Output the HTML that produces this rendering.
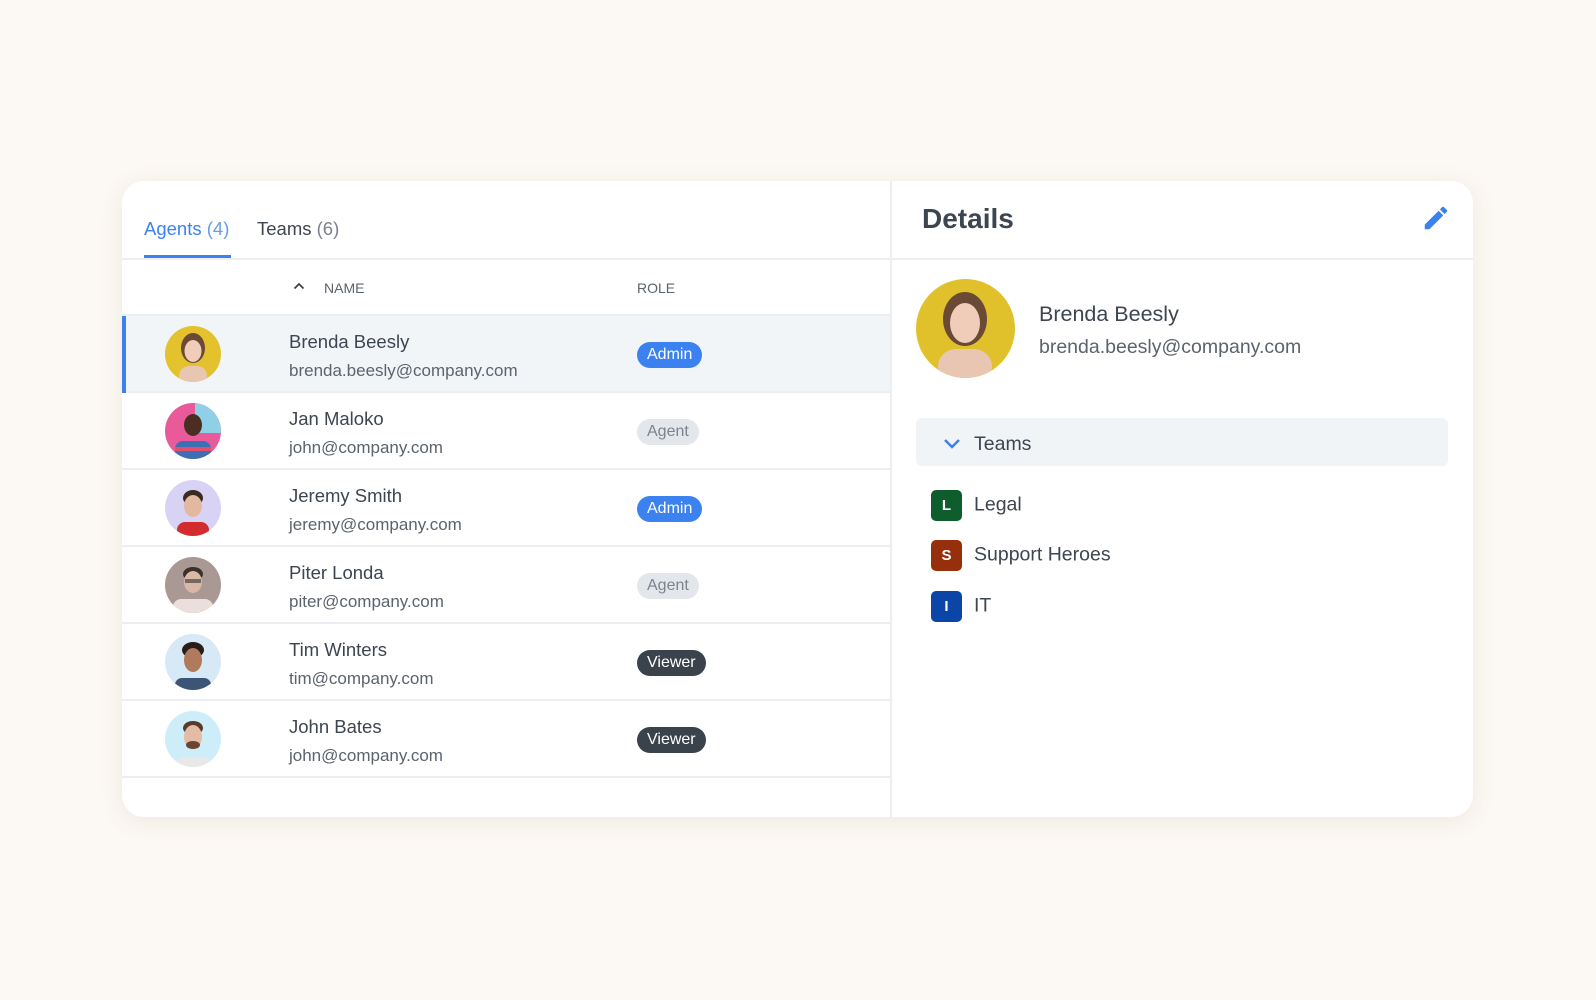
<!DOCTYPE html>
<html><head><meta charset="utf-8"><style>
*{box-sizing:border-box;margin:0;padding:0}
body{width:1596px;height:1000px;background:#fcf8f3;font-family:"Liberation Sans",sans-serif;position:relative;overflow:hidden;color:#3d4550}
.card{position:absolute;left:122px;top:181px;width:1351px;height:636px;background:#fff;border-radius:22px;box-shadow:0 4px 24px rgba(120,100,80,.10);overflow:hidden}
.vdiv{position:absolute;left:768px;top:0;bottom:0;width:2px;background:#eceef0}
.hline{position:absolute;height:2px;background:#eceef0}
.abs{position:absolute;white-space:nowrap}
.tab{font-size:18.5px}
.row{position:absolute;left:0;width:768px;height:77px;border-bottom:2px solid #eceef0}
.av{position:absolute;left:43px;top:10px;width:56px;height:56px;border-radius:50%;overflow:hidden}
.nm{position:absolute;left:167px;top:15px;font-size:18.5px;color:#3d4550}
.em{position:absolute;left:167px;top:45px;font-size:17px;color:#5b636d}
.badge{position:absolute;left:515px;top:26px;height:26px;line-height:26px;border-radius:13px;padding:0 10px;font-size:16px}
.admin{background:#3b82f0;color:#fff}
.agent{background:#e3e7ec;color:#7b838d}
.viewer{background:#3a424c;color:#fff}
.team{position:absolute;left:809px;font-size:19.5px;color:#3d4550}
.tic{display:inline-block;width:31px;height:31px;border-radius:5px;color:#fff;font-weight:bold;font-size:15px;text-align:center;line-height:31px;vertical-align:middle;margin-right:12px}
</style></head><body>
<div class="card">
  <div class="abs tab" style="left:22px;top:37px;color:#3b82f0">Agents <span style="color:#6a9ae8">(4)</span></div>
  <div class="abs tab" style="left:135px;top:37px">Teams <span style="color:#7b838d">(6)</span></div>
  <div class="abs" style="left:22px;top:74px;width:87px;height:3px;background:#3b82f0"></div>
  <div class="hline" style="left:0;top:77px;width:1351px"></div>
  <svg class="abs" style="left:171px;top:101px" width="12" height="8"><path d="M1.5 6.5l4.5-4.5 4.5 4.5" stroke="#444" stroke-width="1.8" fill="none"/></svg>
  <div class="abs" style="left:202px;top:99px;font-size:14px;color:#5b636d">NAME</div>
  <div class="abs" style="left:515px;top:99px;font-size:14px;color:#5b636d">ROLE</div>
  <div class="hline" style="left:0;top:133px;width:768px"></div>

  <div class="row" style="top:135px;background:#f1f5f8"><div class="abs" style="left:0;top:0;width:4px;height:77px;background:#3b82f0"></div>
    <div class="av" style="background:#e3c22e"><svg width="56" height="56"><ellipse cx="28" cy="22" rx="12" ry="15" fill="#6b4a35"/><ellipse cx="28" cy="25" rx="8.5" ry="11" fill="#efcdb8"/><rect x="14" y="40" width="28" height="20" rx="10" fill="#e9c6b1"/></svg></div>
    <div class="nm">Brenda Beesly</div><div class="em">brenda.beesly@company.com</div><div class="badge admin">Admin</div></div>
  <div class="row" style="top:212px">
    <div class="av" style="background:#e85a9a"><svg width="56" height="56"><rect x="30" y="0" width="26" height="30" fill="#8fd0e6"/><ellipse cx="28" cy="22" rx="9" ry="11" fill="#4a2e22"/><rect x="10" y="38" width="36" height="20" rx="8" fill="#3c6fb4"/><rect x="10" y="44" width="36" height="4" fill="#e24e6b"/></svg></div>
    <div class="nm">Jan Maloko</div><div class="em">john@company.com</div><div class="badge agent">Agent</div></div>
  <div class="row" style="top:289px">
    <div class="av" style="background:#d8d3f5"><svg width="56" height="56"><ellipse cx="28" cy="18" rx="10" ry="8" fill="#3a2a22"/><ellipse cx="28" cy="26" rx="9" ry="11" fill="#e2b9a0"/><rect x="12" y="42" width="32" height="16" rx="8" fill="#d22c2c"/></svg></div>
    <div class="nm">Jeremy Smith</div><div class="em">jeremy@company.com</div><div class="badge admin">Admin</div></div>
  <div class="row" style="top:366px">
    <div class="av" style="background:#a99894"><svg width="56" height="56"><ellipse cx="28" cy="17" rx="10" ry="7" fill="#3a302c"/><ellipse cx="28" cy="25" rx="9" ry="11" fill="#d9b8a6"/><rect x="20" y="22" width="16" height="4" fill="#333" opacity=".6"/><rect x="8" y="42" width="40" height="16" rx="8" fill="#eadfdb"/></svg></div>
    <div class="nm">Piter Londa</div><div class="em">piter@company.com</div><div class="badge agent">Agent</div></div>
  <div class="row" style="top:443px">
    <div class="av" style="background:#d7e8f7"><svg width="56" height="56"><ellipse cx="28" cy="16" rx="11" ry="8" fill="#2a1d17"/><ellipse cx="28" cy="26" rx="9" ry="12" fill="#b07a5c"/><rect x="10" y="44" width="36" height="14" rx="7" fill="#3c5577"/></svg></div>
    <div class="nm">Tim Winters</div><div class="em">tim@company.com</div><div class="badge viewer">Viewer</div></div>
  <div class="row" style="top:520px">
    <div class="av" style="background:#cdeef8"><svg width="56" height="56"><ellipse cx="28" cy="17" rx="10" ry="7" fill="#5a3a2a"/><ellipse cx="28" cy="26" rx="9" ry="12" fill="#e4bca6"/><ellipse cx="28" cy="34" rx="7" ry="4" fill="#6a4632"/><rect x="12" y="46" width="32" height="12" rx="6" fill="#e8e8e8"/></svg></div>
    <div class="nm">John Bates</div><div class="em">john@company.com</div><div class="badge viewer">Viewer</div></div>

  <div class="vdiv"></div>
  <div class="abs" style="left:800px;top:22px;font-size:28px;font-weight:bold;color:#3d4550">Details</div>
  <svg class="abs" style="left:1299px;top:22px" width="30" height="30" viewBox="0 0 24 24"><path d="M3 17.25V21h3.75L17.81 9.94l-3.75-3.75L3 17.25zM20.71 7.04a1 1 0 000-1.41l-2.34-2.34a1 1 0 00-1.41 0l-1.83 1.83 3.75 3.75 1.83-1.83z" fill="#3b82f0"/></svg>
  <div class="av" style="left:794px;top:98px;width:99px;height:99px;background:#e0c12c"><svg width="99" height="99"><ellipse cx="49" cy="40" rx="22" ry="27" fill="#6b4a35"/><ellipse cx="49" cy="44" rx="15" ry="20" fill="#efcdb8"/><rect x="22" y="70" width="54" height="35" rx="18" fill="#e9c6b1"/></svg></div>
  <div class="abs" style="left:917px;top:121px;font-size:21.5px;color:#3d4550">Brenda Beesly</div>
  <div class="abs" style="left:917px;top:155px;font-size:19.5px;color:#5b636d">brenda.beesly@company.com</div>
  <div class="abs" style="left:794px;top:237px;width:532px;height:48px;background:#f0f4f7;border-radius:6px"></div>
  <svg class="abs" style="left:820px;top:255px" width="20" height="16"><path d="M3 4l7 7 7-7" stroke="#3b82f0" stroke-width="2.5" fill="none"/></svg>
  <div class="abs" style="left:852px;top:252px;font-size:19.5px;color:#3d4550">Teams</div>
  <div class="team" style="top:309px"><span class="tic" style="background:#0f5c2c">L</span>Legal</div>
  <div class="team" style="top:359px"><span class="tic" style="background:#962f0c">S</span>Support Heroes</div>
  <div class="team" style="top:410px"><span class="tic" style="background:#0c45a8">I</span>IT</div>
</div>
</body></html>
